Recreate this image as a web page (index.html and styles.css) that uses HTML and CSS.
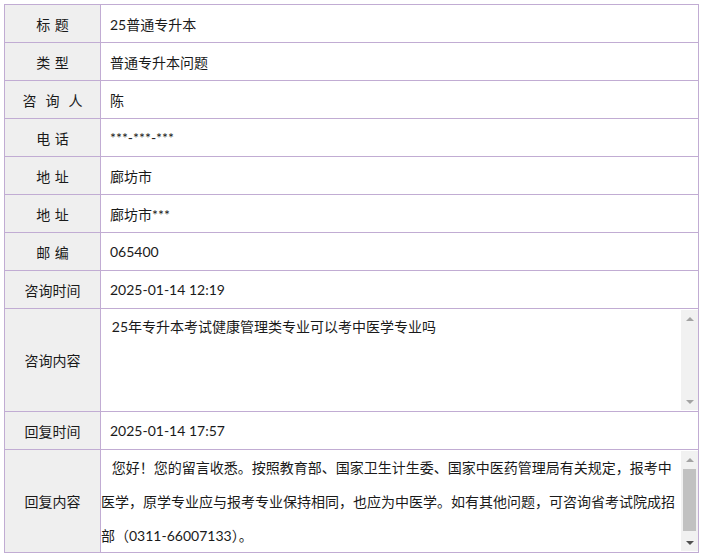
FILE: index.html
```html
<!DOCTYPE html>
<html lang="zh-CN">
<head>
<meta charset="utf-8">
<title>咨询详情</title>
<link rel="stylesheet" href="styles.css">
</head>
<body>
<div class="wrap">
<table class="info">
  <colgroup><col class="c-label"><col class="c-value"></colgroup>
  <tr><th class="lab">标 题</th><td class="val">25普通专升本</td></tr>
  <tr><th class="lab">类 型</th><td class="val">普通专升本问题</td></tr>
  <tr><th class="lab">咨&nbsp;&nbsp;询&nbsp;&nbsp;人</th><td class="val">陈</td></tr>
  <tr><th class="lab">电 话</th><td class="val">***-***-***</td></tr>
  <tr><th class="lab">地 址</th><td class="val">廊坊市</td></tr>
  <tr><th class="lab">地 址</th><td class="val">廊坊市***</td></tr>
  <tr><th class="lab">邮 编</th><td class="val">065400</td></tr>
  <tr><th class="lab">咨询时间</th><td class="val">2025-01-14 12:19</td></tr>
  <tr class="tall">
    <th class="lab">咨询内容</th>
    <td class="box-cell">
      <div class="box">
        <div class="box-text">   25年专升本考试健康管理类专业可以考中医学专业吗</div>
        <div class="sb">
          <div class="sb-btn"><span class="tri up"></span></div>
          <div class="sb-track"></div>
          <div class="sb-btn"><span class="tri down"></span></div>
        </div>
      </div>
    </td>
  </tr>
  <tr><th class="lab">回复时间</th><td class="val">2025-01-14 17:57</td></tr>
  <tr class="tall">
    <th class="lab">回复内容</th>
    <td class="box-cell">
      <div class="box">
        <div class="box-text">   您好！您的留言收悉。按照教育部、国家卫生计生委、国家中医药管理局有关规定，报考中医学，原学专业应与报考专业保持相同，也应为中医学。如有其他问题，可咨询省考试院成招部（0311-66007133）。</div>
        <div class="sb">
          <div class="sb-btn"><span class="tri up"></span></div>
          <div class="sb-track"><div class="sb-thumb"></div></div>
          <div class="sb-btn"><span class="tri down active"></span></div>
        </div>
      </div>
    </td>
  </tr>
</table>
</div>
</body>
</html>
```
FILE: styles.css
```css
html, body {
  margin: 0;
  padding: 0;
  background: #ffffff;
}

.wrap {
  padding: 4px;
}

.info {
  width: 695px;
  border-collapse: collapse;
  table-layout: fixed;
  font-family: "Lato", "Noto Sans CJK SC", sans-serif;
  font-size: 14px;
  color: #1a1a1a;
}

.c-label { width: 96px; }

.info th,
.info td {
  border: 1px solid #c1acd3;
  padding: 0;
  height: 37px;
}

.lab {
  background: #efefef;
  font-family: "DejaVu Sans", "Noto Sans CJK SC", sans-serif;
  font-weight: normal;
  font-size: 14px;
  text-align: center;
  vertical-align: middle;
  white-space: pre;
}

.val {
  padding-left: 9px !important;
  text-align: left;
  vertical-align: middle;
}

.tall th,
.tall td {
  height: 102px;
}

.box-cell {
  vertical-align: top;
}

.box {
  display: flex;
  height: 102px;
}

.box-text {
  flex: 1;
  min-width: 0;
  white-space: pre-wrap;
  line-height: 34px;
  padding-top: 1px;
  overflow: hidden;
}

.sb {
  width: 17px;
  height: 100px;
  margin-top: 1px;
  background: #f1f1f1;
  display: flex;
  flex-direction: column;
}

.sb-btn {
  height: 17px;
  display: flex;
  align-items: center;
  justify-content: center;
}

.sb-track {
  flex: 1;
  padding: 1px 2px 0;
}

.sb-thumb {
  height: 62px;
  background: #c1c1c1;
}

.tri {
  width: 0;
  height: 0;
  border-left: 4px solid transparent;
  border-right: 4px solid transparent;
}

.tri.up {
  border-bottom: 4px solid #a3a3a3;
}

.tri.down {
  border-top: 4px solid #a3a3a3;
}

.tri.down.active {
  border-top-color: #505050;
}
```
